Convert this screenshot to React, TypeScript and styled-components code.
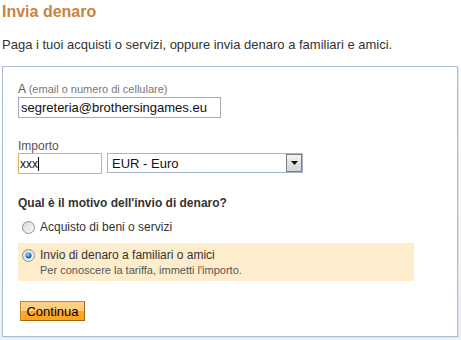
import React from "react";
import styled, { createGlobalStyle } from "styled-components";

const GlobalStyle = createGlobalStyle`
  body {
    margin: 0;
    font-family: "Liberation Sans", Arial, sans-serif;
    background: linear-gradient(#ffffff 0, #ffffff 60px, #eef0f3 340px);
    min-height: 340px;
  }
`;

const Page = styled.div`
  padding: 2px 4px 0 2px;
`;

const Title = styled.h1`
  margin: 0;
  font-size: 16px;
  line-height: 20px;
  font-weight: bold;
  color: #c9833e;
`;

const Intro = styled.p`
  margin: 15px 0 13px;
  font-size: 13px;
  line-height: 16px;
  color: #333;
`;

const Panel = styled.div`
  width: 456px;
  box-sizing: border-box;
  border: 1px solid #a9bed6;
  box-shadow: 1px 1px 0 #dbe3ec;
  background: #fff;
  padding: 15px 15px 15px 15px;
`;

const Label = styled.label<{ $top?: number }>`
  display: block;
  margin-top: ${(p) => p.$top ?? 0}px;
  font-size: 12px;
  line-height: ${(p) => (p.$top ? 14 : 15)}px;
  color: #555;

  small {
    font-size: 11px;
    color: #777;
  }
`;

const TextInput = styled.input`
  display: block;
  width: 203px;
  height: 21px;
  box-sizing: border-box;
  border: 1px solid #a5acb5;
  padding: 0 2px;
  margin: 0;
  font-family: "Liberation Sans", Arial, sans-serif;
  font-size: 13px;
  color: #111;
  outline: none;
`;

const AmountRow = styled.div`
  display: flex;
  gap: 5px;
  align-items: flex-start;
`;

const AmountBox = styled.div`
  width: 84px;
  height: 21px;
  box-sizing: border-box;
  border: 1px solid #dbb35e;
  padding-left: 1px;
  display: flex;
  align-items: center;
  font-size: 12px;
  color: #111;
`;

const Caret = styled.span`
  display: inline-block;
  width: 1px;
  height: 14px;
  background: #000;
`;

const Select = styled.div`
  width: 196px;
  height: 20px;
  box-sizing: border-box;
  border: 1px solid #a5b4c8;
  display: flex;
  align-items: center;
  font-size: 13px;
  color: #111;
  padding-left: 4px;
`;

const SelectText = styled.span`
  flex: 1;
`;

const ArrowButton = styled.span`
  width: 16px;
  height: 18px;
  box-sizing: border-box;
  border: 1px solid #7f7f7f;
  background: linear-gradient(#f2f2f2, #d4d4d4);
  display: flex;
  align-items: center;
  justify-content: center;
`;

const Question = styled.div`
  margin-top: 22px;
  font-size: 12px;
  line-height: 14px;
  font-weight: bold;
  color: #333;
`;

const Option = styled.div<{ $active?: boolean }>`
  width: 396px;
  box-sizing: border-box;
  margin-top: 5px;
  padding: 4px 0 4px 4px;
  background: ${(p) => (p.$active ? "#fdedcc" : "transparent")};
`;

const OptionLine = styled.div`
  display: flex;
  align-items: center;
  gap: 5px;
  font-size: 12px;
  line-height: 14px;
  color: #333;

  svg {
    margin-top: 2px;
  }
`;

const OptionHint = styled.div`
  margin-top: 2px;
  padding-left: 18px;
  font-size: 11px;
  line-height: 13px;
  color: #555;
`;

const Button = styled.button`
  display: block;
  margin: 20px 0 0 2px;
  width: 65px;
  height: 20px;
  padding: 0;
  box-sizing: border-box;
  border: 1px solid #c08a30;
  border-right-color: #9c6a12;
  border-bottom-color: #9c6a12;
  background: linear-gradient(#ffd287 0, #ffcc7a 50%, #ffa724 50%, #ffa51f 100%);
  font-family: "Liberation Sans", Arial, sans-serif;
  font-size: 13px;
  color: #000;
`;

function Radio({ checked }: { checked?: boolean }) {
  return (
    <svg width="13" height="13" viewBox="0 0 13 13">
      <defs>
        <linearGradient id={checked ? "rgOn" : "rgOff"} x1="0" y1="0" x2="1" y2="1">
          <stop offset="0" stopColor="#d6d6d6" />
          <stop offset="1" stopColor="#fbfbfb" />
        </linearGradient>
        <radialGradient id="dot" cx="0.4" cy="0.35" r="0.7">
          <stop offset="0" stopColor="#a8e4ff" />
          <stop offset="0.5" stopColor="#2a8bd8" />
          <stop offset="1" stopColor="#0b4a8a" />
        </radialGradient>
      </defs>
      <circle cx="6.5" cy="6.5" r="6" fill={`url(#${checked ? "rgOn" : "rgOff"})`} stroke="#8e8f8f" />
      {checked && <circle cx="6.5" cy="6.5" r="3" fill="url(#dot)" />}
    </svg>
  );
}

export default function App() {
  return (
    <Page>
      <GlobalStyle />
      <Title>Invia denaro</Title>
      <Intro>Paga i tuoi acquisti o servizi, oppure invia denaro a familiari e amici.</Intro>
      <Panel>
        <Label>
          A <small>(email o numero di cellulare)</small>
        </Label>
        <TextInput defaultValue="segreteria@brothersingames.eu" />

        <Label $top={21}>Importo</Label>
        <AmountRow>
          <AmountBox>
            xxx
            <Caret />
          </AmountBox>
          <Select>
            <SelectText>EUR - Euro</SelectText>
            <ArrowButton>
              <svg width="7" height="4" viewBox="0 0 7 4">
                <path d="M0 0 H7 L3.5 4 Z" fill="#111" />
              </svg>
            </ArrowButton>
          </Select>
        </AmountRow>

        <Question>Qual è il motivo dell'invio di denaro?</Question>
        <Option>
          <OptionLine>
            <Radio />
            Acquisto di beni o servizi
          </OptionLine>
        </Option>
        <Option $active>
          <OptionLine>
            <Radio checked />
            Invio di denaro a familiari o amici
          </OptionLine>
          <OptionHint>Per conoscere la tariffa, immetti l'importo.</OptionHint>
        </Option>

        <Button>Continua</Button>
      </Panel>
    </Page>
  );
}
